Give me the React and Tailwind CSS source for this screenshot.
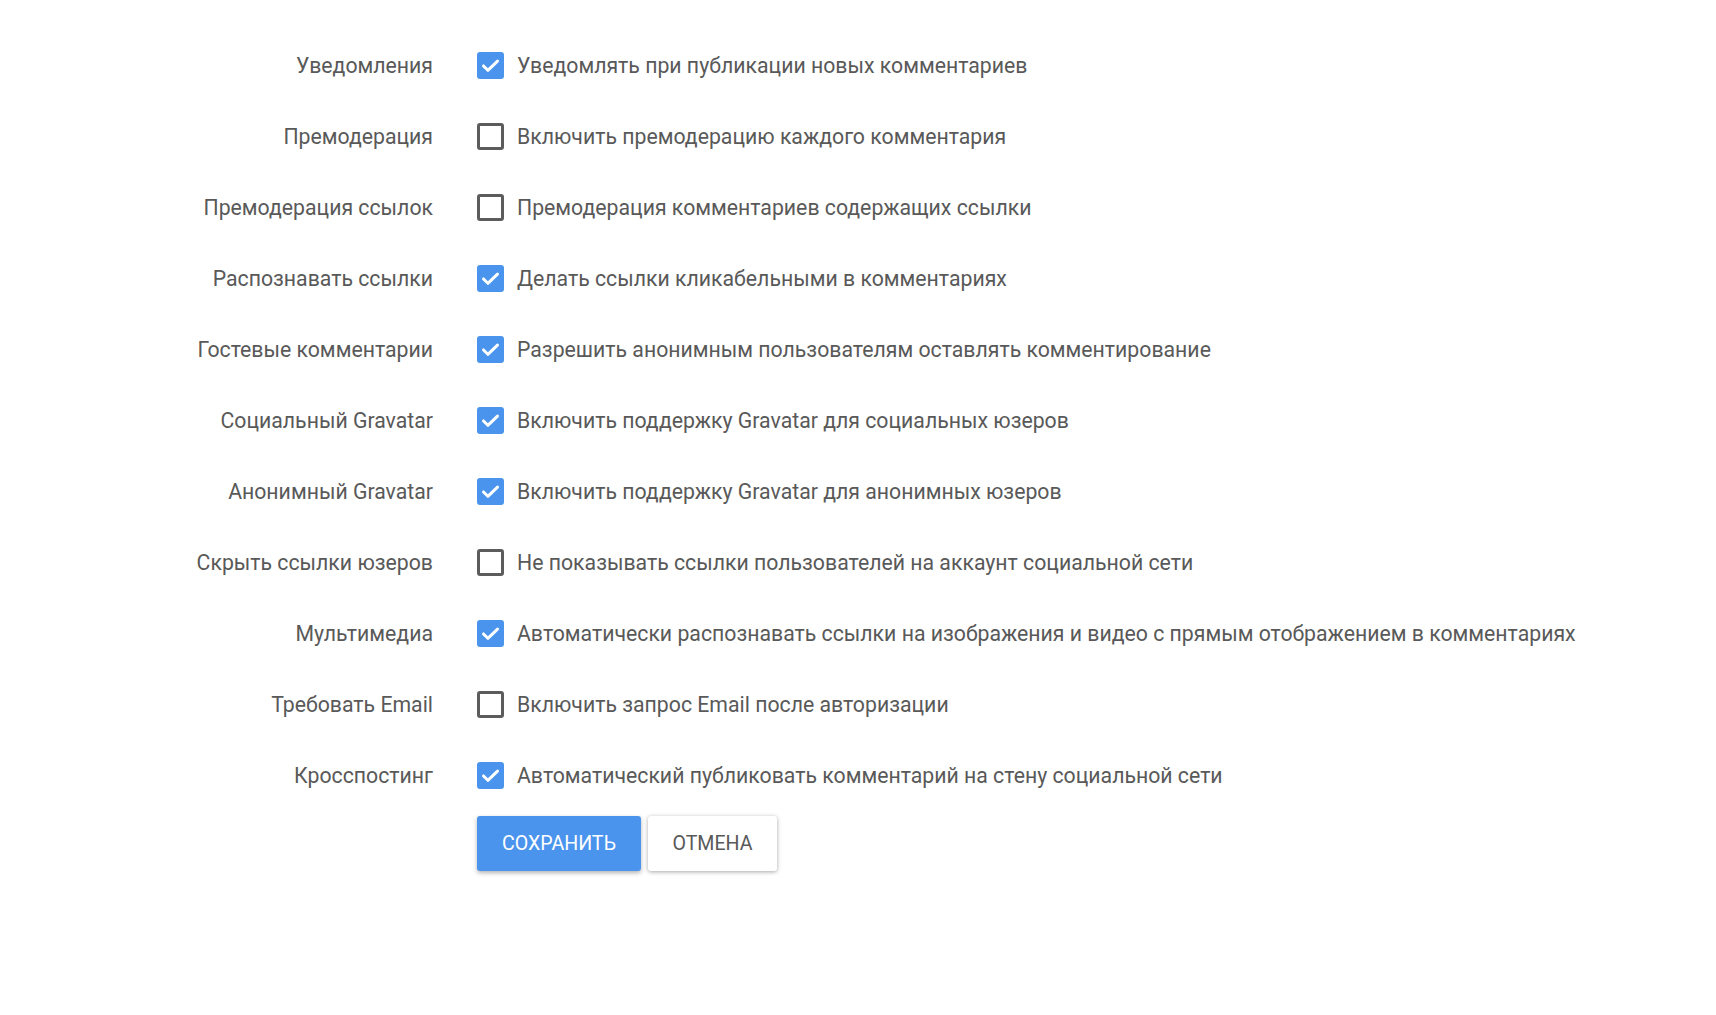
import React, { useState } from "react";

const settings = [
	{ label: "Уведомления", text: "Уведомлять при публикации новых комментариев", on: true },
	{ label: "Премодерация", text: "Включить премодерацию каждого комментария", on: false },
	{ label: "Премодерация ссылок", text: "Премодерация комментариев содержащих ссылки", on: false },
	{ label: "Распознавать ссылки", text: "Делать ссылки кликабельными в комментариях", on: true },
	{ label: "Гостевые комментарии", text: "Разрешить анонимным пользователям оставлять комментирование", on: true },
	{ label: "Социальный Gravatar", text: "Включить поддержку Gravatar для социальных юзеров", on: true },
	{ label: "Анонимный Gravatar", text: "Включить поддержку Gravatar для анонимных юзеров", on: true },
	{ label: "Скрыть ссылки юзеров", text: "Не показывать ссылки пользователей на аккаунт социальной сети", on: false },
	{ label: "Мультимедиа", text: "Автоматически распознавать ссылки на изображения и видео с прямым отображением в комментариях", on: true },
	{ label: "Требовать Email", text: "Включить запрос Email после авторизации", on: false },
	{ label: "Кросспостинг", text: "Автоматический публиковать комментарий на стену социальной сети", on: true },
];

const Checkbox = ({ checked, onChange }) => (
	<button
		type="button"
		onClick={onChange}
		className={`flex items-center justify-center w-[27px] h-[27px] shrink-0 rounded-[3px] ${
			checked ? "bg-[#4a94ee]" : "border-[3px] border-[#5c5c5c] bg-white"
		}`}>
		{checked && (
			<svg width="21" height="21" viewBox="0 0 24 24" fill="none">
				<path
					d="M4 12.5l5 5L20 7"
					stroke="white"
					strokeWidth="3.4"
					strokeLinecap="round"
					strokeLinejoin="round"
				/>
			</svg>
		)}
	</button>
);

const App = () => {
	const [values, setValues] = useState(settings.map((s) => s.on));

	const toggle = (i) =>
		setValues((v) => v.map((x, idx) => (idx === i ? !x : x)));

	return (
		<div className="min-h-screen bg-white pt-[30px] font-['Roboto',sans-serif] text-[21.25px] text-[#595959]">
			{settings.map((item, i) => (
				<div key={item.label} className="flex items-center h-[71px]">
					<div className="w-[433px] shrink-0 text-right">{item.label}</div>
					<div className="flex items-center gap-[13px] ml-[44px]">
						<Checkbox checked={values[i]} onChange={() => toggle(i)} />
						<span>{item.text}</span>
					</div>
				</div>
			))}
			<div className="flex gap-[7px] ml-[477px] mt-[5px]">
				<button className="w-[164px] h-[55px] rounded-[3px] bg-[#4a94ee] text-white text-[19.6px] uppercase shadow-[0_2px_4px_rgba(0,0,0,0.3)]">
					Сохранить
				</button>
				<button className="w-[129px] h-[55px] rounded-[3px] bg-white text-[#595959] text-[19.6px] uppercase shadow-[0_1px_4px_rgba(0,0,0,0.35)]">
					Отмена
				</button>
			</div>
		</div>
	);
};

export default App;
